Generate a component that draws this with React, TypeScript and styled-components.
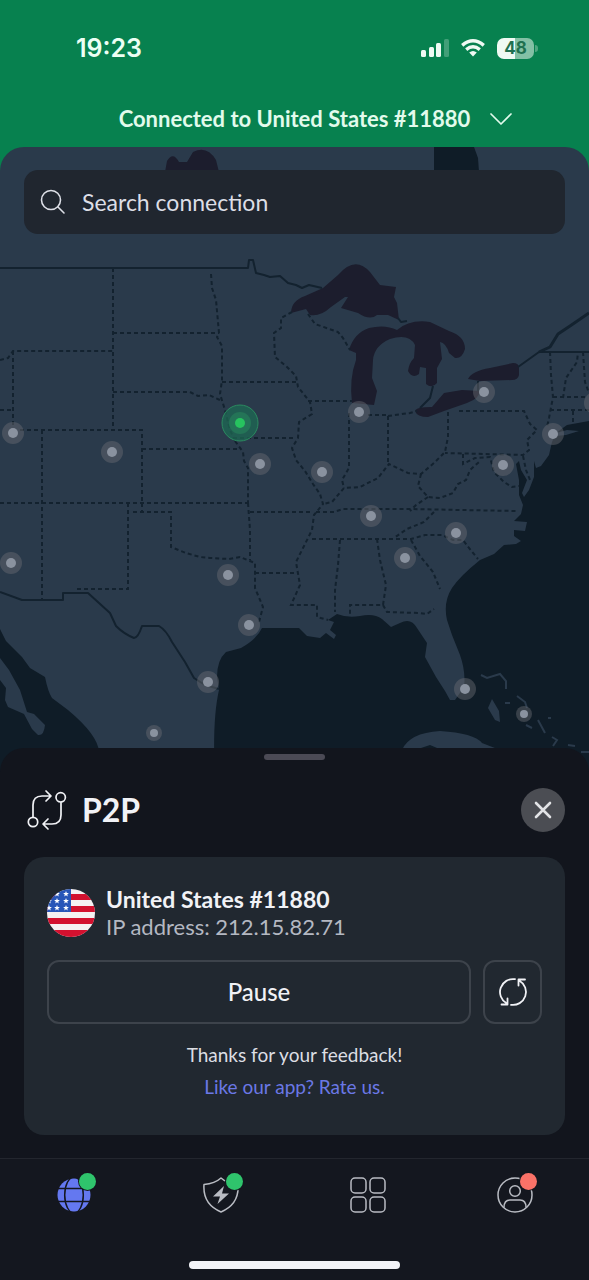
import React from "react";
import styled, { createGlobalStyle } from "styled-components";

const colors = {
  green: "#07814f",
  land: "#2a3a4b",
  water: "#0f1c27",
  lake: "#1c1d2d",
  border: "#13222f",
  sheet: "#12151d",
  nav: "#14171f",
  card: "#212830",
  line: "#3d434b",
  text: "#f1f2f6",
  muted: "#b4b8c2",
  icon: "#b9bcc3",
  link: "#6b78e6",
  online: "#2fc46c",
  alert: "#fa7268",
};

const GlobalStyle = createGlobalStyle`
  *, *::before, *::after { box-sizing: border-box; }
  body { margin: 0; background: ${colors.nav}; }
  button { font: inherit; color: inherit; background: none; border: 0; padding: 0; cursor: pointer; }
  svg { display: block; }
`;

const Page = styled.div`
  min-height: 100vh;
  display: flex;
  flex-direction: column;
  background: ${colors.green};
  color: ${colors.text};
  font-family: Lato, "Noto Sans", sans-serif;
`;

const StatusBar = styled.div`
  display: flex;
  align-items: center;
  justify-content: space-between;
  height: 96px;
  padding: 0 55px 0 76px;
`;

const Clock = styled.time`
  font: 600 25px/32px Inter, sans-serif;
  color: #ecfff4;
`;

const StatusIcons = styled.div`
  display: flex;
  align-items: center;
  gap: 12px;
`;

const Battery = styled.div`
  position: relative;
  width: 37px;
  height: 21px;
  border-radius: 7px;
  background: linear-gradient(90deg, #effaf3 50%, #83c0a5 50%);
  color: #20704f;
  text-align: center;
  font: 700 17px/21px Inter, sans-serif;

  &::after {
    content: "";
    position: absolute;
    right: -4px;
    top: 7px;
    width: 3px;
    height: 7px;
    border-radius: 0 3px 3px 0;
    background: #4fa580;
  }
`;

const ConnectionButton = styled.button`
  display: grid;
  grid-template-columns: 1fr auto 1fr;
  align-items: center;
  gap: 20px;
  height: 51px;
  padding-bottom: 5px;
  font-size: 22px;
  line-height: 28px;
  font-weight: 700;
  color: #e2fbec;

  & > span { grid-column: 2; }
`;

const MapSection = styled.main`
  position: relative;
  flex: 1 0 629px;
  padding: 23px 24px;
  overflow: hidden;
  border-radius: 24px 24px 0 0;
  background: ${colors.land};
`;

const MapCanvas = styled.svg`
  position: absolute;
  inset: 0;
  width: 100%;
  height: 100%;
`;

const SearchBox = styled.label`
  position: relative;
  display: flex;
  align-items: center;
  gap: 16px;
  height: 64px;
  padding: 0 16px;
  border-radius: 14px;
  background: #20262f;
`;

const SearchInput = styled.input`
  flex: 1;
  min-width: 0;
  padding: 0;
  border: 0;
  outline: 0;
  background: none;
  color: ${colors.text};
  font: 400 23px/32px Lato, "Noto Sans", sans-serif;

  &::placeholder { color: #dcdee6; opacity: 1; }
`;

const Sheet = styled.section`
  position: relative;
  margin-top: -28px;
  padding: 6px 24px 23px;
  border-radius: 24px 24px 0 0;
  background: ${colors.sheet};
`;

const Handle = styled.div`
  width: 61px;
  height: 6px;
  margin: 0 auto 28px;
  border-radius: 3px;
  background: #4b4a55;
`;

const SheetHeader = styled.header`
  display: flex;
  align-items: center;
  gap: 14px;
  margin-bottom: 25px;
`;

const Title = styled.h1`
  flex: 1;
  margin: 0;
  font-size: 32px;
  line-height: 44px;
  font-weight: 700;
`;

const CloseButton = styled.button`
  display: grid;
  place-items: center;
  width: 44px;
  height: 44px;
  border-radius: 50%;
  background: #4b4d53;
`;

const Card = styled.div`
  padding: 29px 23px 32px;
  border-radius: 20px;
  background: ${colors.card};
`;

const Server = styled.div`
  display: flex;
  align-items: center;
  gap: 11px;
  margin-bottom: 20px;
`;

const ServerName = styled.h2`
  margin: 0;
  font-size: 23px;
  line-height: 27px;
  font-weight: 700;
`;

const ServerAddress = styled.p`
  margin: 0;
  font-size: 22px;
  line-height: 27px;
  color: ${colors.muted};
`;

const Actions = styled.div`
  display: flex;
  gap: 12px;
  margin-bottom: 15px;
`;

const ActionButton = styled.button<{ $square?: boolean }>`
  display: grid;
  place-items: center;
  flex: ${(p) => (p.$square ? "0 0 59px" : "1")};
  height: 64px;
  border: 2px solid ${colors.line};
  border-radius: 12px;
  font-size: 24px;
  line-height: 32px;
  font-weight: 500;
`;

const Feedback = styled.p`
  margin: 0;
  text-align: center;
  font-size: 19px;
  line-height: 32px;
  color: #dcdee3;
`;

const RateLink = styled.a`
  color: ${colors.link};
  text-decoration: none;
`;

const BottomBar = styled.footer`
  border-top: 1px solid #23262e;
  background: ${colors.nav};
`;

const Tabs = styled.nav`
  display: grid;
  grid-template-columns: repeat(4, 1fr);
`;

const Tab = styled.button`
  display: grid;
  place-items: center;
  height: 72px;
`;

const TabIcon = styled.span`
  position: relative;
  display: block;
`;

const Badge = styled.span<{ $color: string }>`
  position: absolute;
  top: -4px;
  right: -4px;
  width: 17px;
  height: 17px;
  border-radius: 50%;
  background: ${(p) => p.$color};
  box-shadow: 0 0 0 1px ${colors.nav};
`;

const HomeIndicator = styled.div`
  width: 211px;
  height: 8px;
  margin: 30px auto 11px;
  border-radius: 4px;
  background: #f3f4f8;
`;

const pins: { x: number; y: number; small?: boolean }[] = [
  { x: 13, y: 433 }, { x: 112, y: 452 }, { x: 260, y: 464 }, { x: 359, y: 412 },
  { x: 322, y: 472 }, { x: 484, y: 392 }, { x: 553, y: 434 }, { x: 503, y: 465 },
  { x: 371, y: 516 }, { x: 456, y: 533 }, { x: 405, y: 558 }, { x: 11, y: 563 },
  { x: 228, y: 575 }, { x: 249, y: 625 }, { x: 208, y: 682 }, { x: 465, y: 689 },
  { x: 595, y: 403 }, { x: 154, y: 733, small: true }, { x: 524, y: 714, small: true },
];

const stateLines = [
  "M113 268V430",
  "M113 333H219",
  "M211 274L212 288 216 300 219 333 217 337 222 346V380L220 394 225 410 230 430 235 441",
  "M0 360L8 358 13 351H113",
  "M13 351V433",
  "M0 410H13",
  "M20 430H142V503",
  "M113 392H190L198 396 209 395 220 400",
  "M42 430V600",
  "M142 449H237",
  "M235 441L243 452 244 461 248 468V503",
  "M222 382H297",
  "M233 438H295",
  "M0 503H248",
  "M128 503V589H77",
  "M133 512H171V547L186 553 200 557 210 558 229 559 240 557 255 563V588L263 607 259 622",
  "M142 503V512",
  "M248 503L250 530V560",
  "M250 512H312",
  "M255 573H296",
  "M292 312L281 318 281 328 274 333 275 357 287 367 296 376 298 387 310 402 312 414 299 422 298 438 292 448 296 460 305 471 313 484 320 494 323 504 314 515 312 530 303 548 296 562 300 585 291 605H317V617L328 620",
  "M308 314L315 324 338 332 343 338 350 350",
  "M308 401H352",
  "M349 413V468L342 480 344 488",
  "M368 415H388V465",
  "M388 416L410 413 417 411",
  "M448 412V437L445 452 434 463 421 474 408 473 389 464 378 478 360 487 344 488 332 502 323 504",
  "M459 411H524L530 424 537 430 527 440 529 450 523 455 445 453",
  "M523 456L526 470 530 480",
  "M463 454V464L475 458 490 457 494 472 504 482 512 487 519 486",
  "M421 474L418 486 428 497 440 498 453 493 458 484 466 480 470 470 479 462",
  "M428 497L416 505 410 511",
  "M316 512H334L343 509H408L516 511",
  "M434 512L424 522 407 529 394 538",
  "M312 539H394L411 539 425 535H442L453 540 463 540 469 548 478 559",
  "M340 540L338 565 335 590V612",
  "M377 539L380 560 386 585 383 605H350V614",
  "M383 605L387 612 418 613 427 614 434 609",
  "M411 540L420 556 433 572 440 589",
  "M550 352L551 375 553 397 549 418 547 427",
  "M563 398L566 378 577 362 578 352",
  "M583 352L585 382 589 393",
  "M553 397H585",
  "M550 410H589",
  "M573 411V423",
];

const nationalLines = [
  "M0 268H248L249 260H253L256 273 264 275 270 277 280 276 288 283 296 285 302 288 309 285 322 288",
  "M398 318L401 322 407 321",
  "M433 386L430 398 420 408",
  "M478 391V381",
  "M518 367L539 352H589",
  "M0 592L22 600H63V593H88L110 613 116 626Q124 634 134 638 138 638 142 626H159Q166 630 172 642L185 662 194 678 205 685 219 689",
];

function UsMap() {
  return (
    <MapCanvas viewBox="0 147 589 629" preserveAspectRatio="xMidYMid slice" role="img" aria-label="Map of servers in the United States">
      <g fill={colors.water}>
        <path d="M434 147H474L478 158 479 172H434Z" />
        <path d="M589 421L567 425 556 433 552 442 549 455 541 466 536 468 534 461 534 477 529 490 524 497 522 493 527 480 521 470 519 461 516 464 519 480 519 495 523 505 521 514 514 521 527 522 525 531 514 530 514 536 521 541 516 544 504 545 494 554 480 560Q460 576 452 588 443 602 447 620L452 635 460 655Q466 672 464 687L455 700 450 700 445 691 436 677 425 657 427 643 417 628Q411 617 400 623L391 627 382 619Q374 613 360 616 347 618 337 614L328 620 334 622 330 630 336 635 334 639 326 633 320 638 307 636 299 628H262Q257 639 241 648L226 652Q217 660 217 677L219 690Q212 720 215 780H589Z" />
        <path d="M0 629L6 641 22 657 30 668 45 677Q48 692 52 698L68 710Q98 735 99 752V780H0Z" />
      </g>
      <g fill={colors.land}>
        <path d="M0 658L9 670 20 690 27 712 34 714 45 725Q44 736 38 735L32 729 24 714 8 707 5 700 6 688 0 680Z" />
        <path d="M402 750Q409 733 440 731 474 733 482 743L500 750 520 762H470L430 745 415 750Z" />
        <path d="M492 699L499 711 500 722 495 720 488 708Z" />
        <path d="M556 433L567 430 579 431 566 435 556 436Z" />
      </g>
      <g fill="none" stroke={colors.land} strokeWidth={2}>
        <path d="M481 675L487 678 500 674 506 681 506 689M505 703H510M517 696L525 702 527 708M538 720L545 733M552 737L557 740 553 746M568 745L575 746M581 752H589M526 725L532 728M548 718H551" />
      </g>
      <g fill={colors.lake}>
        <path d="M165 172L167 161Q173 151 179 162H187L193 152Q207 145 216 160L219 172Z" />
        <path d="M291 313Q291 301 305 296L323 288 338 275Q355 255 370 272L380 285 396 287 394 297 397 303 399 320 388 315 377 315Q370 321 358 313L341 308 348 297 345 297 331 307Q320 317 310 315L306 309Z" />
        <path d="M349 350Q354 333 369 328 385 324 397 330 410 319 430 322L449 331Q465 336 465 349 462 359 455 358L449 353Q446 343 440 342L442 359 437 368 437 383Q432 389 426 384L426 368 420 367 419 374Q412 379 408 371 409 363 414 358L415 345Q409 333 390 339 374 346 373 360L372 378 377 391 374 405 352 403Q349 379 356 360L356 353Z" />
        <path d="M415 411Q416 407 432 407L444 393 462 390 480 391Q480 398 467 403L444 411 428 417Q417 417 415 411Z" />
        <path d="M468 379Q472 371 490 368L513 363Q519 363 519 368V375Q518 380 512 380L480 381Z" />
      </g>
      <g fill="none" stroke={colors.border} strokeWidth={2} strokeDasharray="4 3">
        {stateLines.map((d) => <path key={d} d={d} />)}
      </g>
      <g fill="none" stroke={colors.border} strokeWidth={2} strokeLinejoin="round">
        {nationalLines.map((d) => <path key={d} d={d} />)}
        <path d="M539 352L550 347 558 334 570 326 589 313" strokeWidth={3} />
      </g>
      {pins.map((p) => (
        <g key={`${p.x}-${p.y}`}>
          <circle cx={p.x} cy={p.y} r={p.small ? 8 : 11} fill="#6a6c74" fillOpacity={0.45} />
          <circle cx={p.x} cy={p.y} r={p.small ? 4 : 5} fill="#8a929f" />
        </g>
      ))}
      <circle cx={240} cy={423} r={18} fill="#1e6a53" fillOpacity={0.75} stroke="#2b8a60" />
      <circle cx={240} cy={423} r={11} fill="#247457" />
      <circle cx={240} cy={423} r={5} fill="#27c35f" />
    </MapCanvas>
  );
}

function Signal() {
  return (
    <svg width="28" height="18" viewBox="0 0 28 18" fill="#effaf3" aria-hidden="true">
      <rect x="0" y="11" width="5" height="7" rx="1.5" />
      <rect x="8" y="8" width="5" height="10" rx="1.5" />
      <rect x="15" y="4" width="5" height="14" rx="1.5" />
      <rect x="23" y="0" width="5" height="18" rx="1.5" opacity="0.25" />
    </svg>
  );
}

function Wifi() {
  return (
    <svg width="24" height="18" viewBox="0 0 24 18" fill="none" stroke="#effaf3" strokeWidth="3.4" aria-hidden="true">
      <path d="M1.2 6.4Q12-2.8 22.8 6.4" />
      <path d="M5.2 10.6Q12 5 18.8 10.6" />
      <path d="M8.2 13.6Q12 10.6 15.8 13.6L12 17.6Z" fill="#effaf3" stroke="none" />
    </svg>
  );
}

function Star({ x, y }: { x: number; y: number }) {
  return (
    <path
      transform={`translate(${x} ${y})`}
      d="M0-3L.8-.9 2.9-.9 1.2.4 1.8 2.5 0 1.2-1.8 2.5-1.2.4-2.9-.9-.8-.9Z"
      fill="#fff"
    />
  );
}

function Flag() {
  return (
    <svg width="48" height="48" viewBox="0 0 48 48" role="img" aria-label="United States flag">
      <clipPath id="flag-circle"><circle cx="24" cy="24" r="24" /></clipPath>
      <g clipPath="url(#flag-circle)">
        <rect width="48" height="48" fill="#f5f1f2" />
        {[5, 17, 29, 41].map((y) => <rect key={y} y={y} width="48" height={y === 41 ? 7 : 6} fill="#d3112f" />)}
        <rect width="24" height="23" fill="#2856b8" />
        {[5, 12, 19].map((y) => [2, 10, 19].map((x) => <Star key={`${x}-${y}`} x={x} y={y} />))}
      </g>
    </svg>
  );
}

export default function App() {
  return (
    <>
      <GlobalStyle />
      <Page>
        <StatusBar>
          <Clock>19:23</Clock>
          <StatusIcons>
            <Signal />
            <Wifi />
            <Battery>48</Battery>
          </StatusIcons>
        </StatusBar>
        <ConnectionButton type="button">
          <span>Connected to United States #11880</span>
          <svg width="22" height="12" viewBox="0 0 22 12" fill="none" stroke="#e2fbec" strokeWidth="1.7" strokeLinecap="round" strokeLinejoin="round" aria-hidden="true">
            <path d="M1 1L11 11 21 1" />
          </svg>
        </ConnectionButton>

        <MapSection>
          <UsMap />
          <SearchBox>
            <svg width="26" height="26" viewBox="0 0 26 26" fill="none" stroke="#dcdee6" strokeWidth="1.6" strokeLinecap="round" aria-hidden="true">
              <circle cx="11" cy="11" r="9.5" />
              <path d="M18 18L24 24" />
            </svg>
            <SearchInput type="search" placeholder="Search connection" aria-label="Search connection" />
          </SearchBox>
        </MapSection>

        <Sheet>
          <Handle />
          <SheetHeader>
            <svg width="44" height="44" viewBox="0 0 44 44" fill="none" stroke={colors.text} strokeWidth="1.7" strokeLinecap="round" strokeLinejoin="round" aria-hidden="true">
              <circle cx="9" cy="34" r="4.7" />
              <circle cx="36.7" cy="9.3" r="4.7" />
              <path d="M9 29V17Q9 8 18 8H26M22 3L27 8 22 13" />
              <path d="M37 14.500V27Q37 36 28 36H20M24 31L19 36 24 41" />
            </svg>
            <Title>P2P</Title>
            <CloseButton type="button" aria-label="Close">
              <svg width="18" height="18" viewBox="0 0 18 18" fill="none" stroke="#e2e3e6" strokeWidth="2.6" strokeLinecap="round" aria-hidden="true">
                <path d="M2 2L16 16M16 2L2 16" />
              </svg>
            </CloseButton>
          </SheetHeader>

          <Card>
            <Server>
              <Flag />
              <div>
                <ServerName>United States #11880</ServerName>
                <ServerAddress>IP address: 212.15.82.71</ServerAddress>
              </div>
            </Server>
            <Actions>
              <ActionButton type="button">Pause</ActionButton>
              <ActionButton type="button" $square aria-label="Reconnect">
                <svg width="30" height="30" viewBox="0 0 30 30" fill="none" stroke={colors.text} strokeWidth="1.8" strokeLinecap="round" strokeLinejoin="round" aria-hidden="true">
                  <path d="M17 2.200A13 13 0 0 0 8.500 26.300M3.500 27.500H9.500V21.500" />
                  <path d="M13 27.800A13 13 0 0 0 21.500 3.700M27 2.500H20.500V8.500" />
                </svg>
              </ActionButton>
            </Actions>
            <Feedback>Thanks for your feedback!</Feedback>
            <Feedback><RateLink href="#rate">Like our app? Rate us.</RateLink></Feedback>
          </Card>
        </Sheet>

        <BottomBar>
          <Tabs aria-label="Main">
            <Tab type="button" aria-label="Connection">
              <TabIcon>
                <svg width="36" height="36" viewBox="0 0 36 36" aria-hidden="true">
                  <circle cx="18" cy="18" r="16.500" fill="#6478f0" />
                  <g fill="none" stroke={colors.nav} strokeWidth="1.500">
                    <path d="M1 11.500H35M1 24.500H35" />
                    <ellipse cx="18" cy="18" rx="9.300" ry="18" />
                  </g>
                </svg>
                <Badge $color={colors.online} />
              </TabIcon>
            </Tab>
            <Tab type="button" aria-label="Threat protection">
              <TabIcon>
                <svg width="36" height="36" viewBox="0 0 36 36" aria-hidden="true">
                  <path d="M18 1Q24 6.500 35 7.500C36 21 30 30 18 35 6 30 0 21 1 7.500Q12 6.500 18 1Z" fill="none" stroke={colors.icon} strokeWidth="1.500" strokeLinejoin="round" />
                  <path d="M21 9L10 19.500H17L14.500 27 26 16.500H19Z" fill={colors.icon} />
                </svg>
                <Badge $color={colors.online} />
              </TabIcon>
            </Tab>
            <Tab type="button" aria-label="Products">
              <TabIcon>
                <svg width="36" height="36" viewBox="0 0 36 36" fill="none" stroke={colors.icon} strokeWidth="1.500" aria-hidden="true">
                  <rect x="1" y="1" width="15" height="15" rx="4" />
                  <rect x="20" y="1" width="15" height="15" rx="4" />
                  <rect x="1" y="20" width="15" height="15" rx="4" />
                  <rect x="20" y="20" width="15" height="15" rx="4" />
                </svg>
              </TabIcon>
            </Tab>
            <Tab type="button" aria-label="Profile">
              <TabIcon>
                <svg width="36" height="36" viewBox="0 0 36 36" fill="none" stroke={colors.icon} strokeWidth="1.500" aria-hidden="true">
                  <circle cx="18" cy="18" r="17" />
                  <circle cx="18" cy="14" r="5.300" />
                  <path d="M7 30.500Q7 23 13 23H23Q29 23 29 30.500" />
                </svg>
                <Badge $color={colors.alert} />
              </TabIcon>
            </Tab>
          </Tabs>
          <HomeIndicator />
        </BottomBar>
      </Page>
    </>
  );
}
